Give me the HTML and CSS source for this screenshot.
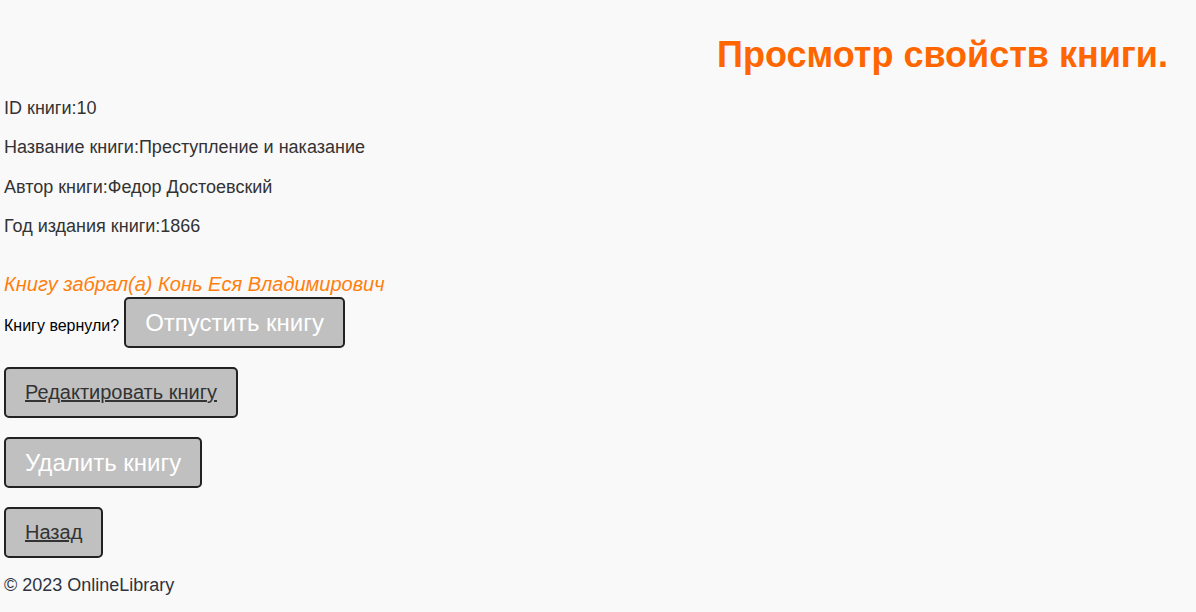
FILE: index.html
```html
<!DOCTYPE html>
<html lang="ru">
<head>
<meta charset="utf-8">
<title>Просмотр свойств книги</title>
<link rel="stylesheet" href="styles.css">
</head>
<body>
<header class="header">
  <h1 class="title">Просмотр свойств книги.</h1>
</header>
<main class="content">
  <p class="prop">ID книги:10</p>
  <p class="prop">Название книги:Преступление и наказание</p>
  <p class="prop">Автор книги:Федор Достоевский</p>
  <p class="prop">Год издания книги:1866</p>
  <p class="taken">Книгу забрал(а) Конь Еся Владимирович</p>
  <div class="return-row">
    <span class="return-label">Книгу вернули?</span>
    <button class="btn btn-white">Отпустить книгу</button>
  </div>
  <div class="btn-row"><a class="btn btn-link" href="#">Редактировать книгу</a></div>
  <div class="btn-row"><button class="btn btn-white">Удалить книгу</button></div>
  <div class="btn-row"><a class="btn btn-link" href="#">Назад</a></div>
</main>
<footer class="footer">© 2023 OnlineLibrary</footer>
</body>
</html>
```

FILE: styles.css
```css
html, body {
  margin: 0;
  padding: 0;
  background: #f9f9f9;
}
body {
  font-family: "Liberation Sans", Arial, sans-serif;
  color: #333333;
  padding: 0 4px;
}
.header {
  padding: 34px 24px 0 0;
  text-align: right;
}
.title {
  margin: 0;
  font-size: 36px;
  font-weight: bold;
  color: #ff6600;
  line-height: 42px;
}
.content {
  display: flex;
  flex-direction: column;
  align-items: flex-start;
  padding-top: 13px;
}
.prop {
  margin: 0;
  font-size: 18px;
  line-height: 39.3px;
}
.taken {
  margin: 26px 0 0 0;
  font-size: 20px;
  font-style: italic;
  color: #ff7f0e;
  line-height: 24px;
}
.return-row {
  display: flex;
  align-items: baseline;
  gap: 5px;
  margin-top: 1px;
}
.return-label {
  font-size: 16px;
  color: #000000;
}
.btn {
  display: inline-block;
  box-sizing: border-box;
  height: 51px;
  padding: 0 19px;
  border: 2px solid #222222;
  border-radius: 5px;
  background: #c0c0c0;
  font-family: "Liberation Sans", Arial, sans-serif;
  font-size: 24px;
  line-height: 47px;
}
.btn-white {
  color: #ffffff;
}
.btn-link {
  color: #333333;
  font-size: 20px;
  text-decoration: underline;
}
.btn-row {
  margin-top: 19px;
}
.footer {
  font-size: 18px;
  color: #2f3341;
  margin-top: 17px;
}
```
